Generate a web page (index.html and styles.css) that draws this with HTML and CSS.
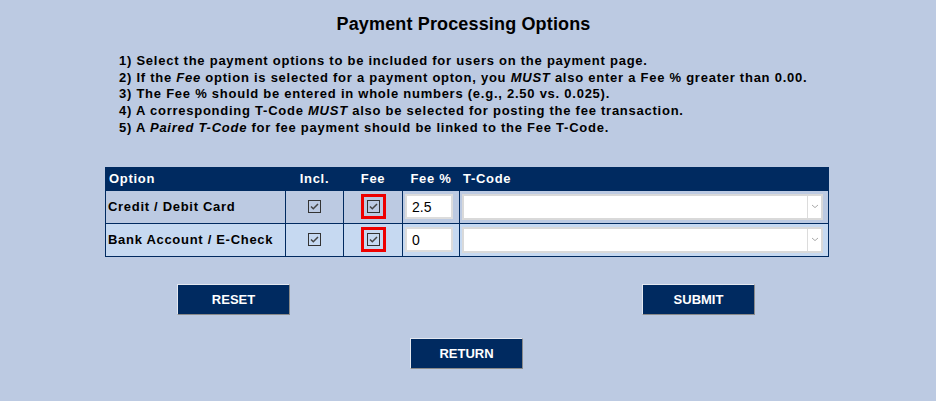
FILE: index.html
```html
<!DOCTYPE html>
<html>
<head>
<meta charset="utf-8">
<title>Payment Processing Options</title>
<link rel="stylesheet" href="styles.css">
</head>
<body>
<div class="page">
  <h1 class="title">Payment Processing Options</h1>
  <div class="notes">
    <div>1) Select the payment options to be included for users on the payment page.</div>
    <div>2) If the <i>Fee</i> option is selected for a payment opton, you <i>MUST</i> also enter a Fee % greater than 0.00.</div>
    <div>3) The Fee % should be entered in whole numbers (e.g., 2.50 vs. 0.025).</div>
    <div>4) A corresponding T-Code <i>MUST</i> also be selected for posting the fee transaction.</div>
    <div>5) A <i>Paired T-Code</i> for fee payment should be linked to the Fee T-Code.</div>
  </div>

  <table class="grid">
    <colgroup>
      <col class="c-opt"><col class="c-incl"><col class="c-fee"><col class="c-pct"><col class="c-tcode">
    </colgroup>
    <thead>
      <tr>
        <th class="left">Option</th>
        <th>Incl.</th>
        <th>Fee</th>
        <th>Fee %</th>
        <th class="left">T-Code</th>
      </tr>
    </thead>
    <tbody>
      <tr class="row-a">
        <td class="label">Credit / Debit Card</td>
        <td class="center"><span class="cb"><svg width="13" height="13" viewBox="0 0 13 13"><rect x="0.5" y="0.5" width="12" height="12" fill="none" stroke="#333"/><path d="M3 6.5 L5.3 8.8 L10 4" fill="none" stroke="#444" stroke-width="1.5"/></svg></span></td>
        <td class="center"><span class="flag"><span class="cb"><svg width="13" height="13" viewBox="0 0 13 13"><rect x="0.5" y="0.5" width="12" height="12" fill="none" stroke="#333"/><path d="M3 6.5 L5.3 8.8 L10 4" fill="none" stroke="#444" stroke-width="1.5"/></svg></span></span></td>
        <td class="pct"><input class="num" type="text" value="2.5"></td>
        <td class="tc"><div class="select"><span class="sel-val"></span><span class="sel-arrow"><svg width="8" height="5" viewBox="0 0 8 5"><path d="M1 1 L4 3.6 L7 1" fill="none" stroke="#aaa" stroke-width="1"/></svg></span></div></td>
      </tr>
      <tr class="row-b">
        <td class="label">Bank Account / E-Check</td>
        <td class="center"><span class="cb"><svg width="13" height="13" viewBox="0 0 13 13"><rect x="0.5" y="0.5" width="12" height="12" fill="none" stroke="#333"/><path d="M3 6.5 L5.3 8.8 L10 4" fill="none" stroke="#444" stroke-width="1.5"/></svg></span></td>
        <td class="center"><span class="flag"><span class="cb"><svg width="13" height="13" viewBox="0 0 13 13"><rect x="0.5" y="0.5" width="12" height="12" fill="none" stroke="#333"/><path d="M3 6.5 L5.3 8.8 L10 4" fill="none" stroke="#444" stroke-width="1.5"/></svg></span></span></td>
        <td class="pct"><input class="num" type="text" value="0"></td>
        <td class="tc"><div class="select"><span class="sel-val"></span><span class="sel-arrow"><svg width="8" height="5" viewBox="0 0 8 5"><path d="M1 1 L4 3.6 L7 1" fill="none" stroke="#aaa" stroke-width="1"/></svg></span></div></td>
      </tr>
    </tbody>
  </table>

  <div class="actions">
    <button class="btn" type="button">RESET</button>
    <button class="btn" type="button">SUBMIT</button>
  </div>
  <div class="actions2">
    <button class="btn" type="button">RETURN</button>
  </div>
</div>
</body>
</html>
```

FILE: styles.css
```css
html, body {
  margin: 0;
  padding: 0;
  background: #bccae2;
}
body {
  font-family: "Liberation Sans", Arial, sans-serif;
  color: #000;
  width: 936px;
  height: 401px;
  overflow: hidden;
}
.page {
  width: 927px;
  padding-top: 13px;
}
.title {
  margin: 0;
  font-size: 18px;
  font-weight: bold;
  text-align: center;
  line-height: 22px;
  letter-spacing: 0.15px;
}
.notes {
  margin: 18px 0 0 119px;
  font-size: 13px;
  font-weight: bold;
  line-height: 16.7px;
  letter-spacing: 0.75px;
  white-space: nowrap;
}
.notes i {
  font-style: italic;
}
.grid {
  margin: 30px 0 0 105px;
  width: 723px;
  border-collapse: collapse;
  table-layout: fixed;
  font-size: 13px;
  font-weight: bold;
  letter-spacing: 0.7px;
}
.c-opt { width: 180px; }
.c-incl { width: 58px; }
.c-fee { width: 59px; }
.c-pct { width: 57px; }
.c-tcode { width: 369px; }
.grid th, .grid td {
  border: 1px solid #002a60;
  padding: 0;
}
.grid th {
  background: #002a60;
  color: #fff;
  height: 22px;
  text-align: center;
  vertical-align: middle;
}
.grid th.left {
  text-align: left;
  padding-left: 3px;
}
.grid td {
  height: 32px;
  vertical-align: middle;
}
.row-a td { background: #bccae2; }
.row-b td { background: #c6d9f1; }
.label {
  padding-left: 2px !important;
  white-space: nowrap;
}
.center {
  text-align: center;
  line-height: 0;
}
.cb {
  display: inline-block;
  width: 13px;
  height: 13px;
  line-height: 0;
  vertical-align: middle;
}
.cb svg { display: block; }
.flag {
  display: inline-block;
  border: 3px solid #ee0000;
  padding: 3px;
  line-height: 0;
  vertical-align: middle;
}
.pct {
  padding-left: 2px !important;
}
.num {
  display: block;
  box-sizing: border-box;
  width: 48px;
  height: 25px;
  margin: 0;
  border: 2px solid #dcdcdc;
  background: #fff;
  padding: 0 0 0 5px;
  font-family: "Liberation Sans", Arial, sans-serif;
  font-size: 14px;
  color: #000;
  outline: none;
}
.tc {
  padding-left: 2px !important;
}
.select {
  box-sizing: border-box;
  width: 361px;
  height: 26px;
  border: 2px solid #d9d9d9;
  background: #fff;
  display: flex;
}
.sel-val { flex: 1; }
.sel-arrow {
  width: 13px;
  border-left: 1px solid #dcdcdc;
  display: flex;
  align-items: center;
  justify-content: center;
}
.sel-arrow svg { display: block; }
.actions {
  display: flex;
  gap: 352px;
  margin: 27px 0 0 177px;
}
.actions2 {
  display: flex;
  margin: 23px 0 0 410px;
}
.btn {
  box-sizing: border-box;
  width: 113px;
  height: 31px;
  background: #002a60;
  color: #fff;
  border: 1px solid;
  border-color: #e4e8f0 #8a8a8a #8a8a8a #e4e8f0;
  font-family: "Liberation Sans", Arial, sans-serif;
  font-size: 13px;
  font-weight: bold;
  padding: 0;
  margin: 0;
  cursor: pointer;
}
```
